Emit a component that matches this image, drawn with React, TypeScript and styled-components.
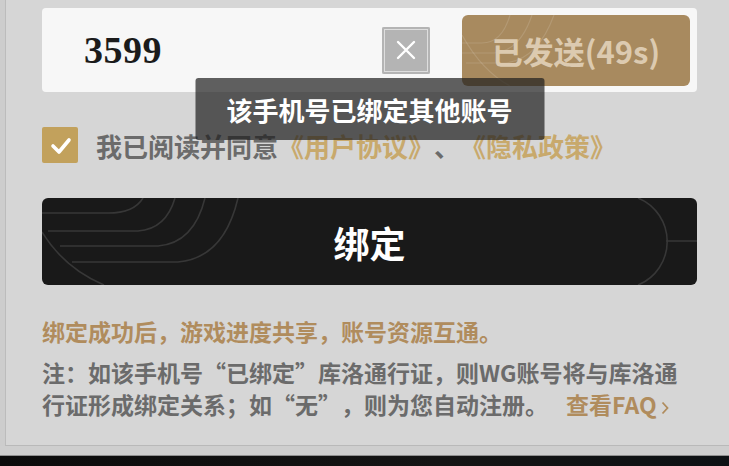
import styled, { createGlobalStyle } from "styled-components";

const GlobalStyle = createGlobalStyle`
	html, body {
		margin: 0;
		padding: 0;
		background: #cdcdcd;
		overflow: hidden;
	}
	* {
		box-sizing: border-box;
	}
`;

const cjk = `"Noto Sans CJK SC", "Noto Sans", sans-serif`;

const Page = styled.div`
	width: 729px;
	height: 466px;
	display: flex;
	flex-direction: column;
	font-family: ${cjk};
	text-spacing-trim: space-all;
`;

const Panel = styled.div`
	height: 446px;
	margin-left: 5px;
	background: #d6d6d6;
	border-left: 1px solid #bcbcbc;
	border-bottom: 1px solid #b9b9b9;
`;

const Band = styled.div`
	height: 10px;
	background: #cecece;
	border-bottom: 1px solid #8f8f8f;
`;

const Footer = styled.div`
	flex: 1;
	background: linear-gradient(90deg, #0b0b0b, #141414 60%, #0d1114);
`;

const Content = styled.div`
	position: relative;
	margin: 8px 32px 0 36px;
`;

const InputBox = styled.div`
	height: 84px;
	display: flex;
	align-items: center;
	padding: 0 7px 0 42px;
	background: #f7f7f7;
	border-radius: 4px;
`;

const Value = styled.div`
	flex: 1;
	font-family: "Liberation Serif", serif;
	font-weight: 700;
	font-size: 38px;
	color: #1b1b1b;
	letter-spacing: 0.5px;
`;

const ClearButton = styled.div`
	width: 48px;
	height: 47px;
	margin-right: 32px;
	display: flex;
	align-items: center;
	justify-content: center;
	background: #b4b4b4;
	border-radius: 2px;
	box-shadow: inset 0 0 0 2px #b4b4b4, inset 0 0 0 3px #dedede;
`;

const SendButton = styled.div`
	position: relative;
	overflow: hidden;
	width: 228px;
	height: 71px;
	display: flex;
	align-items: center;
	justify-content: center;
	background: #a88a5f;
	border-radius: 6px;
	color: #dccab0;
	font-size: 31px;
	font-weight: 700;
	span {
		position: relative;
	}
`;

const Deco = styled.svg`
	position: absolute;
	inset: 0;
	width: 100%;
	height: 100%;
`;

const Toast = styled.div`
	position: absolute;
	top: 70px;
	left: 50%;
	transform: translateX(-50%);
	width: 349px;
	height: 62px;
	display: flex;
	align-items: center;
	justify-content: center;
	background: rgba(30, 30, 30, 0.7);
	border-radius: 3px;
	color: #ffffff;
	font-size: 26px;
	font-weight: 700;
`;

const AgreeRow = styled.div`
	margin-top: 35px;
	height: 36px;
	display: flex;
	align-items: center;
	gap: 18px;
	font-size: 26px;
	font-weight: 700;
	color: #6b6b6b;
	white-space: nowrap;
`;

const CheckBox = styled.div`
	width: 36px;
	height: 36px;
	display: flex;
	align-items: center;
	justify-content: center;
	background: #c2a15c;
	border-radius: 2px;
`;

const Link = styled.span<{ $tone?: "gold" | "brown" }>`
	color: ${(p) => (p.$tone === "brown" ? "#b08c5d" : "#c8a96c")};
`;

const BindButton = styled.div`
	position: relative;
	overflow: hidden;
	margin-top: 35px;
	height: 87px;
	display: flex;
	align-items: center;
	justify-content: center;
	background: #191919;
	border-radius: 6px;
	color: #ffffff;
	font-size: 36px;
	font-weight: 700;
	span {
		position: relative;
	}
`;

const Notes = styled.div`
	margin-top: 30px;
	font-size: 23px;
	font-weight: 700;
	line-height: 32px;
	color: #6b6b6b;
`;

const Lead = styled.div`
	color: #b08c5d;
	margin-bottom: 9px;
`;

const Faq = styled(Link)`
	display: inline-block;
	margin-left: 18px;
	white-space: nowrap;
	svg {
		margin-left: 4px;
		vertical-align: -1px;
	}
`;

function SendDeco() {
	return (
		<Deco viewBox="0 0 228 71" preserveAspectRatio="none">
			<g fill="none" stroke="rgba(255,255,255,0.13)" strokeWidth="1.2">
				<path d="M0 28 H20 Q40 28 48 0" />
				<path d="M0 38 H32 Q58 36 70 0" />
				<path d="M4 48 H44 Q76 44 92 0" />
				<path d="M0 20 Q20 56 48 71" />
			</g>
		</Deco>
	);
}

function BindDeco() {
	return (
		<Deco viewBox="0 0 655 87" preserveAspectRatio="none">
			<g fill="none" stroke="#373737" strokeWidth="1.6">
				<path d="M0 15 H66 Q92 15 101 0" />
				<path d="M6 33 H96 Q124 31 133 0" />
				<path d="M18 48 H116 Q152 45 163 0" />
				<path d="M30 64 H136 Q182 60 196 0" />
				<path d="M0 34 Q22 70 62 87" />
				<path d="M596 0 A47 47 0 0 1 596 87" />
				<path d="M624 43 H655" />
			</g>
		</Deco>
	);
}

export default function App() {
	return (
		<>
			<GlobalStyle />
			<Page>
				<Panel>
					<Content>
						<InputBox>
							<Value>3599</Value>
							<ClearButton>
								<svg width="20" height="20" viewBox="0 0 20 20">
									<path
										d="M2 2 L18 18 M18 2 L2 18"
										stroke="#ffffff"
										strokeWidth="2.4"
										strokeLinecap="round"
									/>
								</svg>
							</ClearButton>
							<SendButton>
								<SendDeco />
								<span>已发送(49s)</span>
							</SendButton>
						</InputBox>
						<Toast>该手机号已绑定其他账号</Toast>
						<AgreeRow>
							<CheckBox>
								<svg width="36" height="36" viewBox="0 0 36 36">
									<path
										d="M11 19 L17 25 L27 13"
										fill="none"
										stroke="#ffffff"
										strokeWidth="3.6"
										strokeLinecap="round"
										strokeLinejoin="round"
									/>
								</svg>
							</CheckBox>
							<div>
								我已阅读并同意<Link>《用户协议》</Link>、<Link>《隐私政策》</Link>
							</div>
						</AgreeRow>
						<BindButton>
							<BindDeco />
							<span>绑定</span>
						</BindButton>
						<Notes>
							<Lead>绑定成功后，游戏进度共享，账号资源互通。</Lead>
							<div>
								注：如该手机号“已绑定”库洛通行证，则WG账号将与库洛通行证形成绑定关系；如“无”，则为您自动注册。
								<Faq $tone="brown">
									查看FAQ
									<svg width="8" height="14" viewBox="0 0 8 14">
										<path
											d="M1.5 1.5 L6.5 7 L1.5 12.5"
											fill="none"
											stroke="#b08c5d"
											strokeWidth="1.8"
										/>
									</svg>
								</Faq>
							</div>
						</Notes>
					</Content>
				</Panel>
				<Band />
				<Footer />
			</Page>
		</>
	);
}
